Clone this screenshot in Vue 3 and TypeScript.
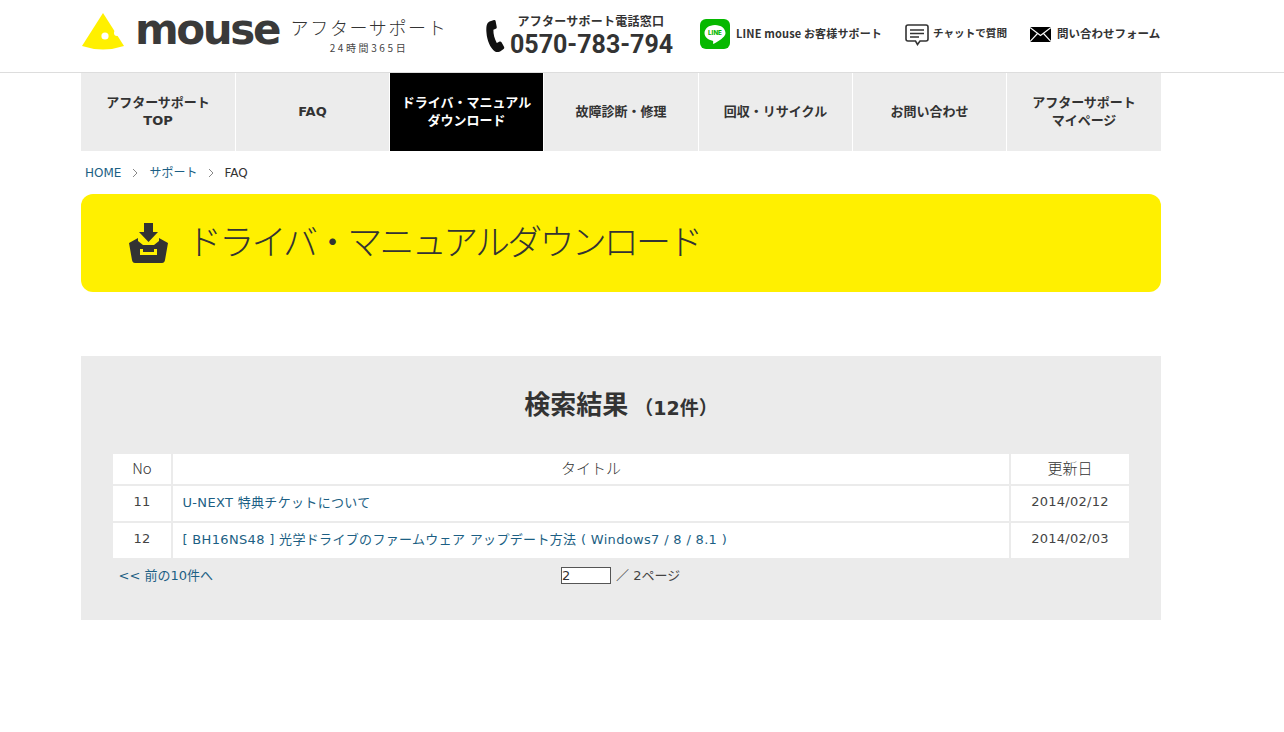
<script setup lang="ts">
const navItems: string[][] = [
  ['アフターサポート', 'TOP'],
  ['FAQ'],
  ['ドライバ・マニュアル', 'ダウンロード'],
  ['故障診断・修理'],
  ['回収・リサイクル'],
  ['お問い合わせ'],
  ['アフターサポート', 'マイページ'],
]
const rows = [
  { no: 11, title: 'U-NEXT 特典チケットについて', date: '2014/02/12' },
  { no: 12, title: '[ BH16NS48 ] 光学ドライブのファームウェア アップデート方法 ( Windows7 / 8 / 8.1 )', date: '2014/02/03' },
]
</script>

<template>
  <div class="page">
    <header class="header">
      <div class="wrap head-row">
        <div class="logo">
          <svg width="44" height="40" viewBox="0 0 44 40" class="cheese">
            <path d="M22 1 L43 34 Q22 41 1 34 Z" fill="#fff000" />
            <circle cx="24" cy="24" r="3.6" fill="#fff" />
            <circle cx="36" cy="21" r="3" fill="#fff" />
          </svg>
          <span class="mouse">mouse</span>
          <div class="after">
            <div class="after-main">アフターサポート</div>
            <div class="after-sub">24時間365日</div>
          </div>
        </div>
        <div class="tel">
          <svg width="20" height="34" viewBox="0 0 20 34" class="phone">
            <path d="M8 1 L3.5 2.5 C0.5 4 0 8 0.5 14 C1 21 4 29 9 32.5 C11 33.6 13.5 33 15.5 31.5 L17.6 30 C18.4 29.4 18.4 28.6 18 27.8 L15.5 23.2 C15 22.3 14 22.2 13.2 22.7 L10.8 24 C8.6 20 7.2 15 7.4 10.8 L9.8 9.8 C10.6 9.4 10.9 8.7 10.7 7.8 L9.6 2 C9.4 1.1 8.8 0.8 8 1 Z" fill="#111" />
          </svg>
          <div class="tel-text">
            <div class="tel-label">アフターサポート電話窓口</div>
            <div class="tel-num">0570-783-794</div>
          </div>
        </div>
        <div class="hlink line">
          <svg width="30" height="30" viewBox="0 0 30 30">
            <rect width="30" height="30" rx="6" fill="#06b800" />
            <path d="M15 6 C8.9 6 4.5 9.6 4.5 14 C4.5 18 8 21 12.6 21.7 C13.6 22 13.2 23.2 13 24.2 C12.9 25 13.6 25 14.3 24.6 C17 23 20.8 20.8 23 18.6 C24.6 17 25.5 15.7 25.5 14 C25.5 9.6 21.1 6 15 6 Z" fill="#fff" />
            <text x="15" y="16.4" text-anchor="middle" class="line-word">LINE</text>
          </svg>
          <span>LINE mouse お客様サポート</span>
        </div>
        <div class="hlink chat">
          <svg width="24" height="22" viewBox="0 0 24 22">
            <path d="M3 1 H21 Q23 1 23 3 V15 Q23 17 21 17 H15 L12.5 20.5 L10.5 17 H3 Q1 17 1 15 V3 Q1 1 3 1 Z" fill="#fff" stroke="#333" stroke-width="1.6" />
            <path d="M5 6 H19 M5 9.5 H19 M5 13 H14" stroke="#333" stroke-width="1.6" fill="none" />
          </svg>
          <span>チャットで質問</span>
        </div>
        <div class="hlink mail">
          <svg width="21" height="15" viewBox="0 0 21 15">
            <rect width="21" height="15" fill="#000" />
            <path d="M0 0.5 L10.5 8.5 L21 0.5 M0 14.5 L7.5 6.5 M21 14.5 L13.5 6.5" stroke="#fff" stroke-width="1.1" fill="none" />
          </svg>
          <span>問い合わせフォーム</span>
        </div>
      </div>
    </header>

    <main class="wrap">
      <nav class="nav">
        <a v-for="(item, i) in navItems" :key="i" class="nav-item" :class="{ active: i === 2 }">
          <span v-for="line in item" :key="line">{{ line }}</span>
        </a>
      </nav>

      <div class="crumbs">
        <a>HOME</a>
        <svg width="6" height="10" viewBox="0 0 6 10"><path d="M1 1 L5 5 L1 9" fill="none" stroke="#888" /></svg>
        <a>サポート</a>
        <svg width="6" height="10" viewBox="0 0 6 10"><path d="M1 1 L5 5 L1 9" fill="none" stroke="#888" /></svg>
        <span>FAQ</span>
      </div>

      <section class="banner">
        <svg width="40" height="40" viewBox="0 0 40 40">
          <path d="M15 0 H24 V9 H29 L19.5 19 L10 9 H15 Z" fill="#333" />
          <path d="M0 20 L9 15 V18 L14 22 H25 L30 18 V15 L39 20 L36 37 Q35.5 40 33 40 H6 Q3.5 40 3 37 Z" fill="#333" />
          <path d="M11 26 V32 H28 V26 H25 V29 H14 V26 Z" fill="#fff000" />
        </svg>
        <h1>ドライバ・マニュアルダウンロード</h1>
      </section>

      <section class="panel">
        <h2>検索結果<small>（12件）</small></h2>
        <div class="grid">
          <div class="th">No</div>
          <div class="th">タイトル</div>
          <div class="th">更新日</div>
          <template v-for="r in rows" :key="r.no">
            <div class="td center">{{ r.no }}</div>
            <div class="td"><a>{{ r.title }}</a></div>
            <div class="td center">{{ r.date }}</div>
          </template>
        </div>
        <div class="pager">
          <a class="prev">&lt;&lt; 前の10件へ</a>
          <div class="pages">
            <input class="page-input" type="text" value="2" />
            <span class="page-total">／ 2ページ</span>
          </div>
        </div>
      </section>
    </main>
  </div>
</template>

<style>
html, body { margin: 0; background: #fff; }
</style>

<style scoped>
.page {
  height: 732px;
  overflow: hidden;
  color: #333;
  font-family: "DejaVu Sans", "Noto Sans CJK JP", sans-serif;
}
.wrap { width: 1080px; margin-left: 81px; }
.header { height: 72px; border-bottom: 1px solid #ddd; }
.head-row { display: flex; height: 72px; align-items: flex-start; position: relative; }

.logo { display: flex; align-items: flex-start; width: 367px; flex: none; }
.cheese { margin-top: 12px; flex: none; }
.mouse {
  margin-left: 10px;
  margin-top: 5px;
  font: 800 42px/50px "DejaVu Sans", sans-serif;
  letter-spacing: -2.4px;
  color: #3a3a3a;
}
.after { margin-left: auto; text-align: center; width: 158px; }
.after-main {
  margin-top: 15px;
  font: 300 18px/24px "Noto Sans CJK JP", sans-serif;
  letter-spacing: 1.65px;
  white-space: nowrap;
}
.after-sub {
  margin-top: 2px;
  font: 400 10px/14px "Noto Sans CJK JP", sans-serif;
  letter-spacing: 2.6px;
  color: #444;
}

.tel { display: flex; margin-left: 38px; flex: none; width: 186px; }
.phone { margin-top: 19px; flex: none; }
.tel-text { margin-left: 4px; text-align: center; width: 162px; }
.tel-label {
  margin-top: 13px;
  font: 700 12px/16px "Noto Sans CJK JP", sans-serif;
  letter-spacing: .25px;
  white-space: nowrap;
}
.tel-num {
  margin-top: 1px;
  font: 700 25px/30px Roboto, sans-serif;
  white-space: nowrap;
}

.hlink {
  display: flex;
  align-items: center;
  flex: none;
  font: 700 11px/14px "Noto Sans CJK JP", sans-serif;
  white-space: nowrap;
}
.hlink span { display: block; }
.line { margin-left: 28px; margin-top: 19px; width: 205px; }
.line span { margin-left: 6px; margin-top: -3px; letter-spacing: .15px; }
.line-word { font: 800 6.2px Inter, sans-serif; fill: #06b800; }
.chat { margin-top: 24px; width: 125px; }
.chat span { margin-left: 4px; margin-top: -4px; font-size: 10.6px; }
.mail { margin-top: 27px; }
.mail span { margin-left: 6px; margin-top: -4px; font-size: 11.5px; }

.nav {
  display: grid;
  grid-template-columns: 154px 153px 153px 154px 153px 153px 154px;
  gap: 1px;
  height: 78px;
}
.nav-item {
  display: flex;
  flex-direction: column;
  align-items: center;
  justify-content: center;
  background: #ececec;
  font: 700 13px/18px "DejaVu Sans", "Noto Sans CJK JP", sans-serif;
  color: #333;
}
.nav-item.active { background: #000; color: #fff; }

.crumbs {
  display: flex;
  align-items: center;
  height: 43px;
  padding-left: 4px;
  font: 400 12px/16px "DejaVu Sans", "Noto Sans CJK JP", sans-serif;
}
.crumbs a { color: #1c5f84; }
.crumbs svg { margin: 0 11px 0 11px; }
.crumbs span { margin-left: -1px; }

.banner {
  display: flex;
  align-items: center;
  height: 98px;
  padding-left: 48px;
  box-sizing: border-box;
  background: #fff000;
  border-radius: 12px;
}
.banner h1 {
  margin: 0 0 7px 18px;
  font: 300 35px/44px "Noto Sans CJK JP", sans-serif;
  letter-spacing: -2.8px;
  white-space: nowrap;
  color: #333;
}

.panel {
  margin-top: 64px;
  height: 264px;
  box-sizing: border-box;
  padding: 30px 32px 0;
  background: #ebebeb;
}
.panel h2 {
  margin: 0;
  height: 68px;
  text-align: center;
  font: 700 26px/38px "DejaVu Sans", "Noto Sans CJK JP", sans-serif;
  color: #333;
}
.panel small { font-size: 19px; margin-left: 6px; vertical-align: -1px; }

.grid {
  display: grid;
  grid-template-columns: 58px 1fr 118px;
  grid-template-rows: 30px 35px 35px;
  gap: 2px;
}
.th, .td { background: #fff; display: flex; align-items: center; }
.th {
  justify-content: center;
  padding-bottom: 2px;
  box-sizing: border-box;
  font: 300 15px/20px "Noto Sans CJK JP", sans-serif;
}
.td {
  padding-left: 9.5px;
  padding-bottom: 5px;
  box-sizing: border-box;
  font-size: 13px;
  letter-spacing: .33px;
  color: #444;
}
.td a { color: #1c5f84; white-space: nowrap; }
.td.center { justify-content: center; padding-left: 0; letter-spacing: .25px; }

.pager {
  display: flex;
  align-items: center;
  height: 34px;
  font-size: 13px;
  position: relative;
}
.prev { margin-left: 5.5px; width: 442.5px; color: #1c5f84; margin-top: -2px; }
.pages { display: flex; align-items: center; }
.page-input {
  width: 50px;
  height: 17px;
  box-sizing: border-box;
  border: 1px solid #555;
  padding: 0;
  background: #fff;
  color: #333;
  font: 400 13px/15px "DejaVu Sans", sans-serif;
  outline: none;
}
.page-total { margin-left: 5px; color: #444; margin-top: -2px; }
</style>
